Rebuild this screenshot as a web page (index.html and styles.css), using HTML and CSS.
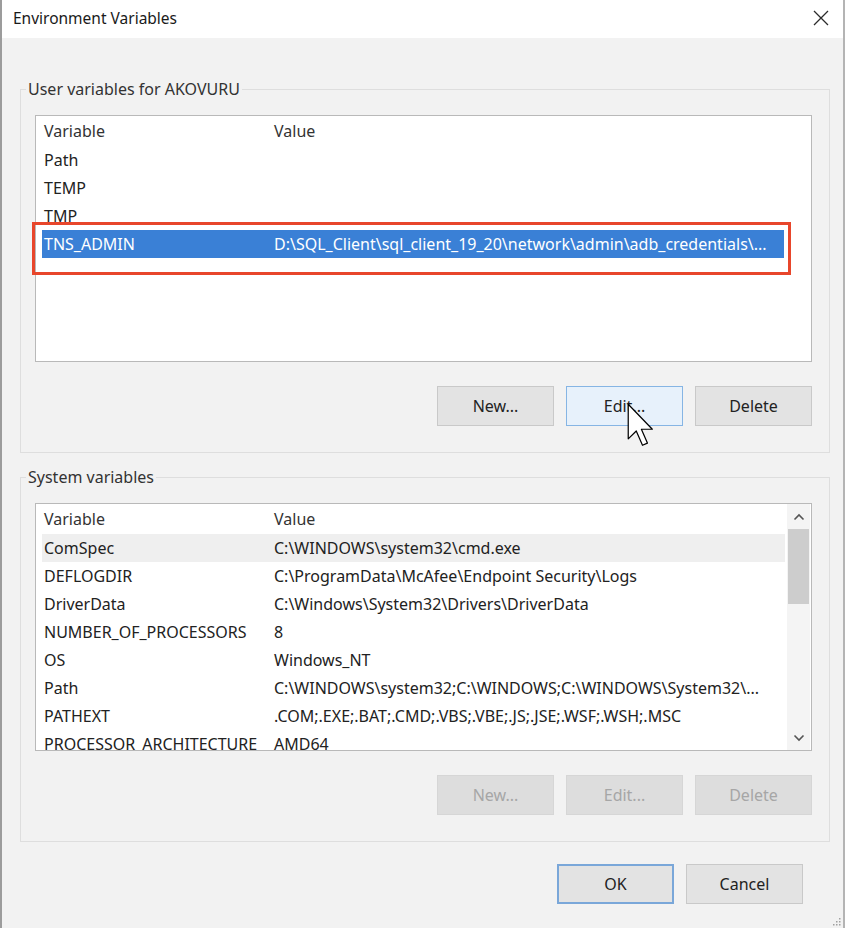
FILE: index.html
```html
<!DOCTYPE html>
<html lang="en">
<head>
<meta charset="utf-8">
<title>Environment Variables</title>
<link rel="stylesheet" href="styles.css">
</head>
<body>
<div class="window">
  <div class="titlebar">
    <span class="title">Environment Variables</span>
    <svg class="close" width="16" height="16" viewBox="0 0 16 16"><path d="M1 1 L15 15 M15 1 L1 15" stroke="#2b2b2b" stroke-width="1.3" fill="none"/></svg>
  </div>
  <div class="content">
    <fieldset class="group">
      <legend>User variables for AKOVURU</legend>
      <div class="listbox">
        <div class="table user">
          <div class="row head"><span>Variable</span><span>Value</span></div>
          <div class="row"><span>Path</span><span></span></div>
          <div class="row"><span>TEMP</span><span></span></div>
          <div class="row"><span>TMP</span><span></span></div>
          <div class="row selected"><span>TNS_ADMIN</span><span>D:\SQL_Client\sql_client_19_20\network\admin\adb_credentials\...</span></div>
        </div>
      </div>
      <div class="buttons">
        <button class="btn">New...</button>
        <button class="btn hot">Edit...</button>
        <button class="btn">Delete</button>
      </div>
      <div class="annotation"></div>
      <svg class="cursor" width="29" height="46" viewBox="0 0 13 20.6"><path d="M1 1 L1 16.5 L4.6 13 L7.4 19.4 L9.6 18.4 L6.9 12.2 L11.8 12.2 Z" fill="#fff" stroke="#000" stroke-width="0.55" stroke-linejoin="round"/></svg>
    </fieldset>

    <fieldset class="group">
      <legend>System variables</legend>
      <div class="listbox sys">
        <div class="table system">
          <div class="row head"><span>Variable</span><span>Value</span></div>
          <div class="row focus"><span>ComSpec</span><span>C:\WINDOWS\system32\cmd.exe</span></div>
          <div class="row"><span>DEFLOGDIR</span><span>C:\ProgramData\McAfee\Endpoint Security\Logs</span></div>
          <div class="row"><span>DriverData</span><span>C:\Windows\System32\Drivers\DriverData</span></div>
          <div class="row"><span>NUMBER_OF_PROCESSORS</span><span>8</span></div>
          <div class="row"><span>OS</span><span>Windows_NT</span></div>
          <div class="row"><span>Path</span><span>C:\WINDOWS\system32;C:\WINDOWS;C:\WINDOWS\System32\...</span></div>
          <div class="row"><span>PATHEXT</span><span>.COM;.EXE;.BAT;.CMD;.VBS;.VBE;.JS;.JSE;.WSF;.WSH;.MSC</span></div>
          <div class="row"><span>PROCESSOR_ARCHITECTURE</span><span>AMD64</span></div>
        </div>
        <div class="scrollbar">
          <div class="sb-btn"><svg width="12" height="8" viewBox="0 0 12 8"><path d="M1.5 6.5 L6 2 L10.5 6.5" stroke="#555" stroke-width="1.6" fill="none"/></svg></div>
          <div class="sb-track"><div class="sb-thumb"></div></div>
          <div class="sb-btn"><svg width="12" height="8" viewBox="0 0 12 8"><path d="M1.5 1.5 L6 6 L10.5 1.5" stroke="#555" stroke-width="1.6" fill="none"/></svg></div>
        </div>
      </div>
      <div class="buttons">
        <button class="btn" disabled>New...</button>
        <button class="btn" disabled>Edit...</button>
        <button class="btn" disabled>Delete</button>
      </div>
    </fieldset>

    <div class="footer">
      <button class="btn default">OK</button>
      <button class="btn">Cancel</button>
    </div>
    <svg class="grip" width="10" height="10" viewBox="0 0 10 10"><g fill="#a0a0a0"><rect x="8" y="2" width="1.5" height="1.5"/><rect x="5" y="5" width="1.5" height="1.5"/><rect x="8" y="5" width="1.5" height="1.5"/><rect x="2" y="8" width="1.5" height="1.5"/><rect x="5" y="8" width="1.5" height="1.5"/><rect x="8" y="8" width="1.5" height="1.5"/></g></svg>
  </div>
</div>
</body>
</html>
```

FILE: styles.css
```css
* { box-sizing: border-box; }

html, body {
  margin: 0;
  padding: 0;
  background: #ffffff;
}

body {
  font-family: "Noto Sans", "Open Sans", "DejaVu Sans", sans-serif;
  color: #222;
  font-size: 16px;
}

.window {
  width: 845px;
  height: 928px;
  border-left: 2px solid #9c9c9c;
  border-right: 2px solid #b4b4b4;
  display: flex;
  flex-direction: column;
}

.titlebar {
  height: 38px;
  flex: none;
  background: #ffffff;
  display: flex;
  align-items: center;
  justify-content: space-between;
  padding: 0 14px 2px 11px;
}

.title {
  font-size: 15.5px;
  color: #1a1a1a;
}

.close { display: block; }

.content {
  flex: 1;
  background: #f2f2f2;
  position: relative;
  display: flex;
  flex-direction: column;
}

.group {
  position: relative;
  margin: 41px 13px 0 18px;
  padding: 16px 17px 26px 5px;
  border: 1px solid #dedede;
  min-width: 0;
}

.group + .group { margin-top: 14px; }

.group legend {
  padding: 0 2px;
  line-height: 20px;
  font-size: 16px;
  color: #333;
}

.listbox {
  margin-left: 9px;
  height: 247px;
  background: #ffffff;
  border: 1px solid #b9b9b9;
  display: flex;
  overflow: hidden;
}

.listbox.sys { height: 248px; }

.table {
  flex: 1;
  min-width: 0;
  padding: 0 27px 0 6px;
}

.table.system { padding: 0 2px 0 6px; }

.row {
  display: grid;
  grid-template-columns: 230px 1fr;
  align-items: center;
  height: 28px;
  padding-left: 2px;
  white-space: nowrap;
  overflow: hidden;
  color: #222;
}

.row.head { height: 30px; color: #333; }

.row.selected {
  background: #3a80d6;
  color: #ffffff;
}

.row.focus { background: #efefef; }

.scrollbar {
  width: 23px;
  margin-right: 1px;
  background: #f4f4f4;
  display: flex;
  flex-direction: column;
}

.sb-btn {
  height: 25px;
  display: flex;
  align-items: center;
  justify-content: center;
}

.sb-track { flex: 1; }

.sb-thumb {
  height: 75px;
  margin: 0 1px;
  background: #cdcdcd;
}

.buttons {
  display: flex;
  justify-content: flex-end;
  gap: 12px;
  margin-top: 24px;
}

.btn {
  width: 117px;
  height: 40px;
  font-family: inherit;
  font-size: 16px;
  color: #222;
  background: #e3e3e3;
  border: 1px solid #c9c9c9;
  padding: 0;
}

.btn.hot {
  background: #e7f1fb;
  border-color: #86b5e4;
}

.btn:disabled {
  background: #dddddd;
  border-color: #d6d6d6;
  color: #a6a6a6;
}

.btn.default {
  border: 2px solid #7aa7d9;
}

.footer {
  display: flex;
  justify-content: flex-end;
  gap: 12px;
  margin-top: 22px;
  padding-right: 40px;
}

.annotation {
  position: absolute;
  left: 11px;
  top: 123px;
  width: 759px;
  height: 53px;
  border: 3px solid #e8462b;
  pointer-events: none;
}

.cursor {
  position: absolute;
  left: 605px;
  top: 303px;
}

.grip {
  position: absolute;
  right: 2px;
  bottom: 2px;
}
```
